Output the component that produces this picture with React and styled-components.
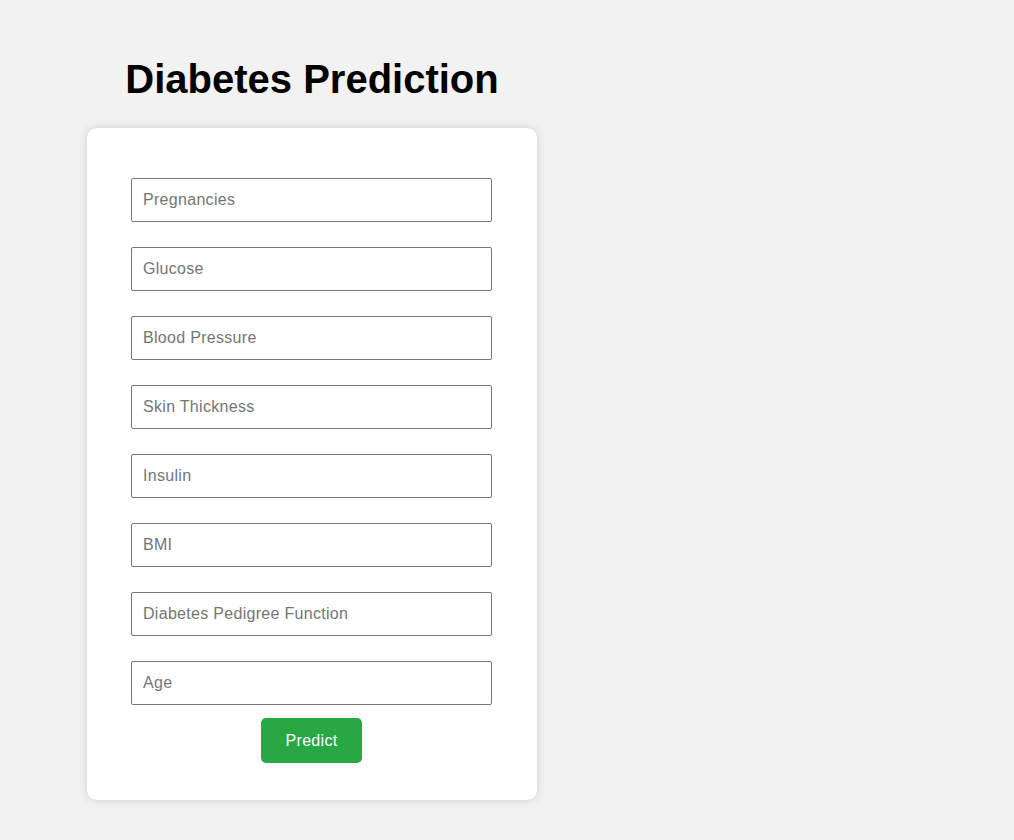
import React from "react";
import styled, { createGlobalStyle } from "styled-components";

const GlobalStyle = createGlobalStyle`
  html, body {
    margin: 0;
    padding: 0;
    background: #f2f2f2;
    font-family: "Liberation Sans", Arial, sans-serif;
  }
`;

const Page = styled.div`
  padding: 56px 0 40px 87px;
`;

const Wrap = styled.div`
  width: 450px;
`;

const Title = styled.h1`
  margin: 0 0 26px;
  font-size: 40px;
  line-height: 46px;
  font-weight: 700;
  text-align: center;
  color: #000;
`;

const Card = styled.form`
  background: #fff;
  border-radius: 10px;
  box-shadow: 0 0 10px rgba(0, 0, 0, 0.15);
  padding: 50px 45px 37px 44px;
  display: flex;
  flex-direction: column;
  align-items: center;
`;

const Fields = styled.div`
  width: 100%;
  display: flex;
  flex-direction: column;
  gap: 25px;
`;

const Input = styled.input`
  box-sizing: border-box;
  width: 100%;
  height: 44px;
  margin: 0;
  padding: 0 11px;
  border: 1px solid #767676;
  border-radius: 2px;
  font-family: "Liberation Sans", Arial, sans-serif;
  font-size: 16px;
  letter-spacing: 0.3px;
  color: #000;
  outline: none;
  &::placeholder {
    color: #757575;
  }
`;

const Button = styled.button`
  margin-top: 13px;
  height: 45px;
  padding: 0 25px;
  border: none;
  border-radius: 5px;
  background: #28a745;
  color: #fff;
  font-family: "Liberation Sans", Arial, sans-serif;
  font-size: 16px;
  letter-spacing: 0.3px;
  cursor: pointer;
`;

const fields = [
  "Pregnancies",
  "Glucose",
  "Blood Pressure",
  "Skin Thickness",
  "Insulin",
  "BMI",
  "Diabetes Pedigree Function",
  "Age"
];

const App = () => {
  return (
    <Page>
      <GlobalStyle />
      <Wrap>
        <Title>Diabetes Prediction</Title>
        <Card onSubmit={e => e.preventDefault()}>
          <Fields>
            {fields.map(name => (
              <Input key={name} type="text" placeholder={name} />
            ))}
          </Fields>
          <Button type="submit">Predict</Button>
        </Card>
      </Wrap>
    </Page>
  );
};

export default App;
